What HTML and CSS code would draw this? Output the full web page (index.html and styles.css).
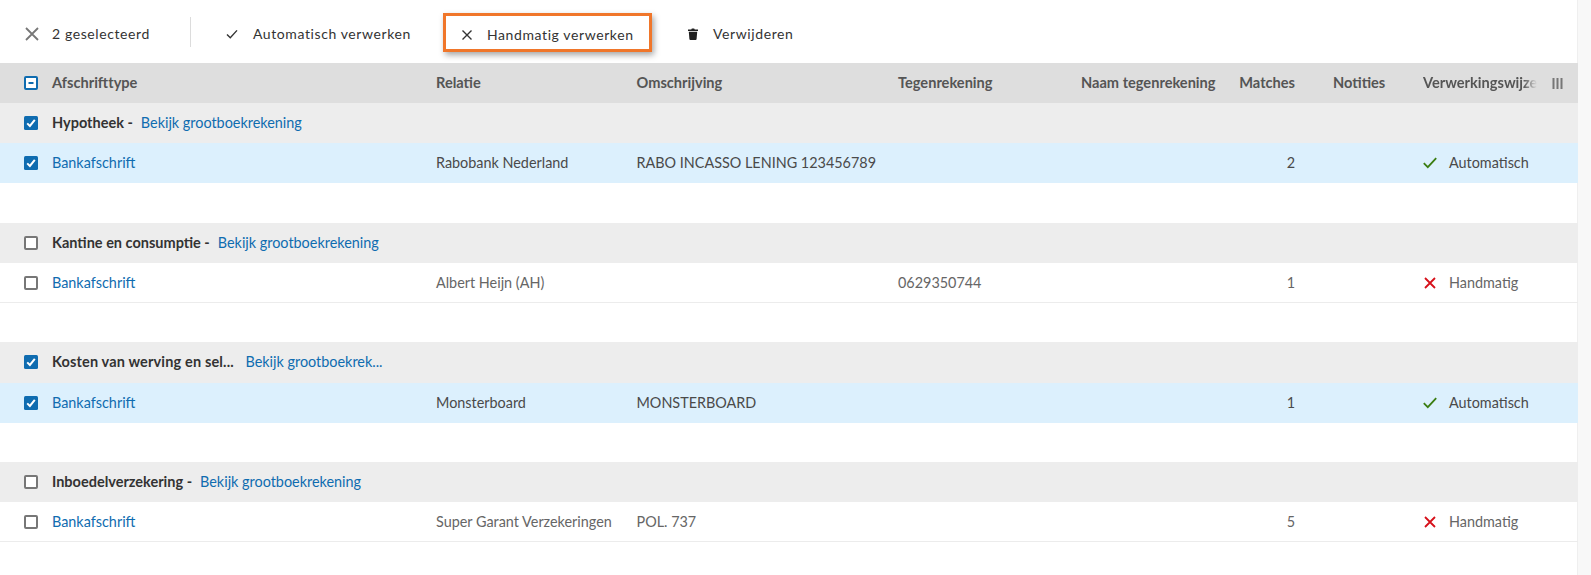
FILE: index.html
```html
<!DOCTYPE html>
<html lang="nl">
<head>
<meta charset="utf-8">
<title>Afschriften</title>
<link rel="stylesheet" href="styles.css">
</head>
<body>
<svg class="defs" width="0" height="0" aria-hidden="true">
  <symbol id="box-on" viewBox="0 0 14 14"><rect width="14" height="14" rx="1.5" fill="#0f6cb0"/><path d="M3.2 7.4 5.9 10 10.8 3.9" fill="none" stroke="#fff" stroke-width="2"/></symbol>
  <symbol id="box-off" viewBox="0 0 14 14"><rect x="1" y="1" width="12" height="12" rx="1" fill="#fff" stroke="#777" stroke-width="2"/></symbol>
  <symbol id="box-mixed" viewBox="0 0 14 14"><rect x="1" y="1" width="12" height="12" rx="1" fill="#fff" stroke="#0f6cb0" stroke-width="2"/><rect x="4.500" y="6" width="5" height="2" fill="#0f6cb0"/></symbol>
  <symbol id="ok" viewBox="0 0 14 12"><path d="M.8 6.200 4.800 10.200 13.200 1.200" fill="none" stroke="#3b7d12" stroke-width="1.8"/></symbol>
  <symbol id="no" viewBox="0 0 12 12"><path d="M1 1 11 11M11 1 1 11" fill="none" stroke="#d6101a" stroke-width="1.8"/></symbol>
</svg>
<main class="page">
  <div class="toolbar">
    <button class="tool tool-count">
      <svg class="i14" viewBox="0 0 14 14"><path d="M1 1 13 13M13 1 1 13" fill="none" stroke="#777" stroke-width="1.8"/></svg>
      <span>2 geselecteerd</span>
    </button>
    <span class="divider"></span>
    <button class="tool tool-auto">
      <svg class="i12" viewBox="0 0 12 12"><path d="M1 6.400 4.300 9.700 11 2.400" fill="none" stroke="#333" stroke-width="1.4"/></svg>
      <span>Automatisch verwerken</span>
    </button>
    <button class="tool tool-manual">
      <svg class="i12" viewBox="0 0 12 12"><path d="M1.500 1.500 10.500 10.500M10.500 1.500 1.500 10.500" fill="none" stroke="#333" stroke-width="1.4"/></svg>
      <span>Handmatig verwerken</span>
    </button>
    <button class="tool tool-delete">
      <svg class="i12" viewBox="0 0 12 12"><path d="M4.300 1.600Q4.300.6 5.300.6H6.700Q7.700.6 7.700 1.600H11V2.900H1V1.600ZM1.800 3.700H10.200L9.600 11Q9.500 12 8.600 12H3.400Q2.500 12 2.400 11Z" fill="#1f1f1f"/></svg>
      <span>Verwijderen</span>
    </button>
  </div>

  <div class="row head">
    <span class="check"><svg class="box"><use href="#box-mixed"/></svg></span>
    <span>Afschrifttype</span><span>Relatie</span><span>Omschrijving</span><span>Tegenrekening</span>
    <span class="naam">Naam tegenrekening</span><span class="num">Matches</span><span class="notes">Notities</span>
    <span class="fade">Verwerkingswijze</span>
    <svg class="cols" viewBox="0 0 11 11"><path d="M1.500 0V11M5.500 0V11M9.500 0V11" stroke="#777" stroke-width="2"/></svg>
  </div>

  <section class="group">
    <div class="group-head">
      <span class="check"><svg class="box"><use href="#box-on"/></svg></span>
      <b class="group-name">Hypotheek -</b><a class="link">Bekijk grootboekrekening</a>
    </div>
    <div class="row selected">
      <span class="check"><svg class="box"><use href="#box-on"/></svg></span>
      <a class="link">Bankafschrift</a><span>Rabobank Nederland</span><span>RABO INCASSO LENING 123456789</span><span></span><span></span>
      <span class="num">2</span><span class="notes"></span>
      <span class="mode"><svg class="ok"><use href="#ok"/></svg>Automatisch</span>
    </div>
  </section>

  <section class="group">
    <div class="group-head">
      <span class="check"><svg class="box"><use href="#box-off"/></svg></span>
      <b class="group-name">Kantine en consumptie -</b><a class="link">Bekijk grootboekrekening</a>
    </div>
    <div class="row">
      <span class="check"><svg class="box"><use href="#box-off"/></svg></span>
      <a class="link">Bankafschrift</a><span>Albert Heijn (AH)</span><span></span><span>0629350744</span><span></span>
      <span class="num">1</span><span class="notes"></span>
      <span class="mode"><svg class="no"><use href="#no"/></svg>Handmatig</span>
    </div>
  </section>

  <section class="group">
    <div class="group-head">
      <span class="check"><svg class="box"><use href="#box-on"/></svg></span>
      <b class="group-name group-name-long">Kosten van werving en sel...</b><a class="link">Bekijk grootboekrek...</a>
    </div>
    <div class="row selected">
      <span class="check"><svg class="box"><use href="#box-on"/></svg></span>
      <a class="link">Bankafschrift</a><span>Monsterboard</span><span>MONSTERBOARD</span><span></span><span></span>
      <span class="num">1</span><span class="notes"></span>
      <span class="mode"><svg class="ok"><use href="#ok"/></svg>Automatisch</span>
    </div>
  </section>

  <section class="group">
    <div class="group-head">
      <span class="check"><svg class="box"><use href="#box-off"/></svg></span>
      <b class="group-name">Inboedelverzekering -</b><a class="link">Bekijk grootboekrekening</a>
    </div>
    <div class="row">
      <span class="check"><svg class="box"><use href="#box-off"/></svg></span>
      <a class="link">Bankafschrift</a><span>Super Garant Verzekeringen</span><span>POL. 737</span><span></span><span></span>
      <span class="num">5</span><span class="notes"></span>
      <span class="mode"><svg class="no"><use href="#no"/></svg>Handmatig</span>
    </div>
  </section>
</main>
</body>
</html>
```
FILE: styles.css
```css
* { box-sizing: border-box; }
html, body { margin: 0; height: 100%; }
body {
  background: #fff;
  font: 14.4px/20px Lato, sans-serif;
  color: #666;
  overflow: hidden;
}
.defs { position: absolute; }
.page {
  width: 1591px;
  height: 575px;
  border-right: 13px solid #f8f8f8;
  box-shadow: inset -1px 0 0 #efefef;
  background: #fff;
}
.toolbar {
  height: 63px;
  display: flex;
  align-items: center;
  color: #333;
  padding-top: 5px;
  font-size: 14px;
  letter-spacing: .6px;
}
.tool {
  display: flex;
  align-items: center;
  border: 0;
  background: none;
  padding: 0;
  font: inherit;
  letter-spacing: inherit;
  color: inherit;
  white-space: nowrap;
}
.tool-count { margin-left: 25px; gap: 13px; }
.divider { width: 1px; height: 30px; background: #dcdcdc; margin-left: 40px; margin-top: -5px; }
.tool-auto { margin-left: 35px; gap: 15px; }
.tool-manual {
  align-self: flex-start;
  margin-left: 32px;
  margin-top: 8px;
  height: 39px;
  width: 209px;
  padding: 4px 0 0 15px;
  gap: 14px;
  border: 3px solid #f0762a;
  box-shadow: 2px 3px 6px rgba(0,0,0,.35);
}
.tool-delete { margin-left: 35px; gap: 14px; }
.i14 { width: 14px; height: 14px; }
.i12 { width: 12px; height: 12px; }

.row {
  display: grid;
  grid-template-columns: 52px 384px 200.5px 261.5px 183px 160px 54px 128px 1fr;
  align-items: center;
  height: 40px;
  white-space: nowrap;
}
.check { display: flex; padding-left: 24px; }
.box { width: 14px; height: 14px; }
.head {
  background: #dedede;
  font-size: 14.6px;
  font-weight: 700;
  color: #555;
  position: relative;
}
.fade {
  width: 114px;
  overflow: hidden;
  -webkit-mask-image: linear-gradient(90deg, #000 88%, transparent);
  mask-image: linear-gradient(90deg, #000 88%, transparent);
}
.cols { position: absolute; left: 1552px; top: 15px; width: 11px; height: 11px; }
.num { text-align: right; }
.notes { padding-left: 38px; }
.head .num { justify-self: end; }
.group { padding-bottom: 39.33px; }
.group-head {
  display: flex;
  align-items: center;
  height: 40.33px;
  background: #ededed;
  white-space: nowrap;
}
.group-name { margin-left: 14px; font-size: 14.5px; font-weight: 700; color: #333; margin-right: 8px; }
.group-name-long { width: 181.5px; margin-right: 12px; letter-spacing: .15px; }
.link { color: #0f6cb0; }
.selected { background: #dcf0fd; color: #4a4a4a; }
.row:not(.selected):not(.head) { border-bottom: 1px solid #ececec; padding-top: 1px; }
.mode { display: flex; align-items: center; gap: 12px; }
.ok { width: 14px; height: 12px; }
.no { width: 12px; height: 12px; margin: 0 1px; }
```
